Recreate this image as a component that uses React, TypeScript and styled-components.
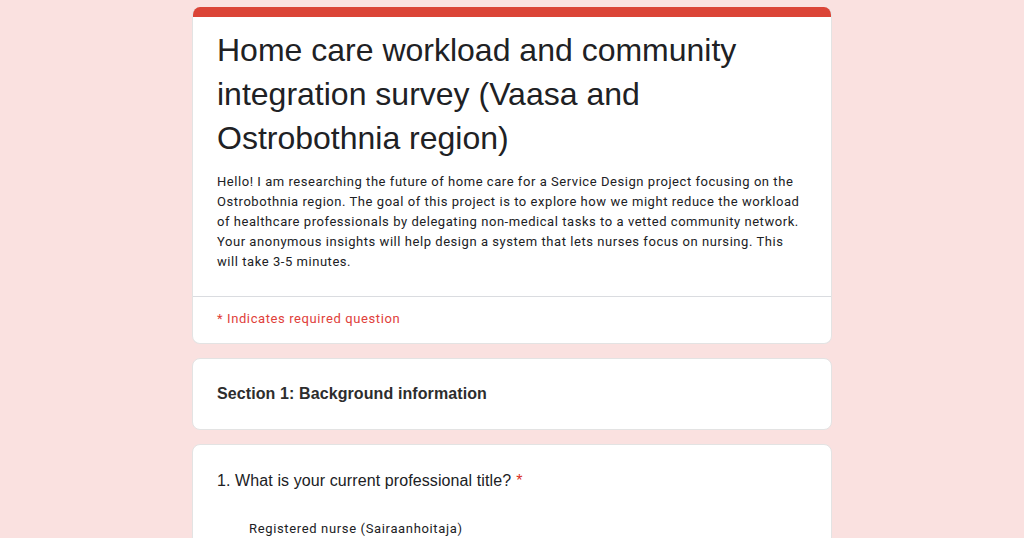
import React from 'react'
import styled, { createGlobalStyle } from 'styled-components'

const GlobalStyle = createGlobalStyle`
  html, body {
    margin: 0;
    padding: 0;
    background: #fae1e0;
  }
  body {
    font-family: Roboto, 'Liberation Sans', Arial, sans-serif;
    color: #202124;
  }
`

const Page = styled.div`
  width: 640px;
  margin: 0 auto;
  padding-top: 7px;
  display: flex;
  flex-direction: column;
  gap: 14px;
`

const Card = styled.div`
  background: #fff;
  border: 1px solid #e3e3e3;
  border-radius: 8px;
  overflow: hidden;
`

const HeaderCard = styled(Card)`
  border-top: none;
`

const AccentBar = styled.div`
  height: 10px;
  background: #db4437;
`

const HeaderBody = styled.div`
  padding: 11px 24px 24px;
`

const Title = styled.h1`
  margin: 0;
  font-family: 'Liberation Sans', Arial, sans-serif;
  font-weight: 400;
  font-size: 32px;
  line-height: 44px;
  color: #202124;
`

const Description = styled.p`
  margin: 12px 0 0;
  font-size: 13px;
  line-height: 20px;
  letter-spacing: 0.55px;
  color: #202124;
`

const Divider = styled.div`
  height: 1px;
  background: #dadce0;
`

const RequiredNote = styled.div`
  padding: 12px 24px 14px;
  font-size: 13px;
  line-height: 20px;
  letter-spacing: 0.6px;
  color: #e0403a;
`

const SectionTitle = styled.div`
  padding: 25px 24px;
  font-family: 'Liberation Sans', Arial, sans-serif;
  font-weight: 700;
  font-size: 16px;
  line-height: 20px;
  letter-spacing: 0.1px;
  color: #2d2d2d;
`

const QuestionBody = styled.div`
  padding: 24px 24px 24px;
`

const QuestionText = styled.div`
  font-family: 'Liberation Sans', Arial, sans-serif;
  font-size: 16px;
  line-height: 24px;
  letter-spacing: 0.1px;
`

const Star = styled.span`
  color: #d93025;
  margin-left: 5px;
`

const OptionList = styled.div`
  margin-top: 26px;
  display: flex;
  flex-direction: column;
  gap: 16px;
`

const Option = styled.div`
  padding-left: 32px;
  font-size: 13px;
  line-height: 20px;
  letter-spacing: 0.65px;
`

export default function App() {
  return (
    <>
      <GlobalStyle />
      <Page>
        <HeaderCard>
          <AccentBar />
          <HeaderBody>
            <Title>Home care workload and community integration survey (Vaasa and Ostrobothnia region)</Title>
            <Description>
              Hello! I am researching the future of home care for a Service Design project focusing on the
              Ostrobothnia region. The goal of this project is to explore how we might reduce the workload
              of healthcare professionals by delegating non-medical tasks to a vetted community network.
              Your anonymous insights will help design a system that lets nurses focus on nursing. This
              will take 3-5 minutes.
            </Description>
          </HeaderBody>
          <Divider />
          <RequiredNote>* Indicates required question</RequiredNote>
        </HeaderCard>
        <Card>
          <SectionTitle>Section 1: Background information</SectionTitle>
        </Card>
        <Card>
          <QuestionBody>
            <QuestionText>
              1. What is your current professional title?<Star>*</Star>
            </QuestionText>
            <OptionList>
              <Option>Registered nurse (Sairaanhoitaja)</Option>
            </OptionList>
          </QuestionBody>
        </Card>
      </Page>
    </>
  )
}
